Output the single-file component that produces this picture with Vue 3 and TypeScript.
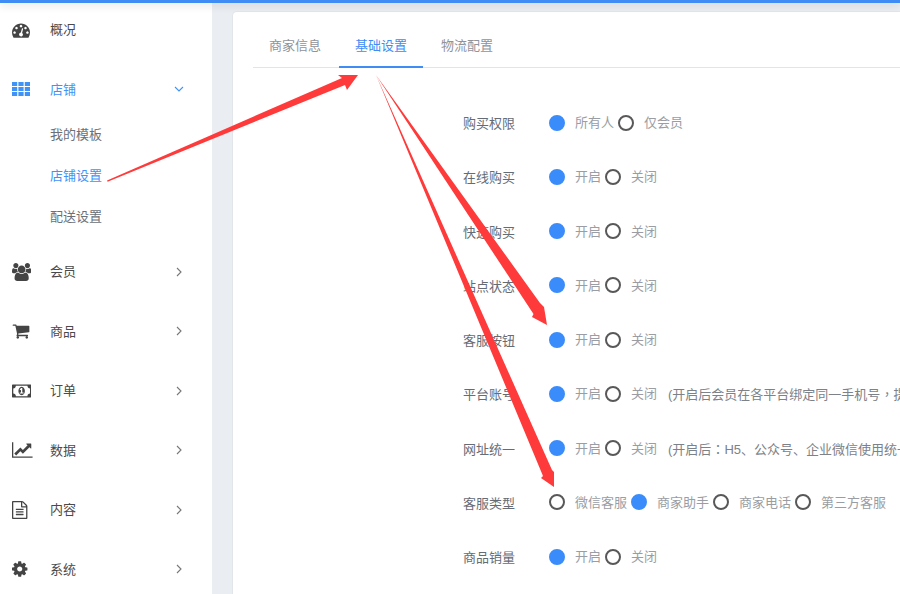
<script setup lang="ts">
import { ref } from 'vue'

interface Icon {
  box: string
  d: string
}

interface NavItem {
  label: string
  icon: Icon
  open?: boolean
  children?: string[]
}

interface Choice {
  text: string
  on?: boolean
}

interface FormRow {
  label: string
  choices: Choice[]
  note?: string
}

const icons: Record<string, Icon> = {
  dashboard: {
    box: '0 0 1792 1792',
    d: 'M384 1152q0-53-37.5-90.5t-90.5-37.5-90.5 37.5-37.5 90.5 37.5 90.5 90.5 37.5 90.5-37.5 37.5-90.5zm192-448q0-53-37.5-90.5t-90.5-37.5-90.5 37.5-37.5 90.5 37.5 90.5 90.5 37.5 90.5-37.5 37.5-90.5zm428 481l101-382q6-26-7.5-48.5t-38.5-29.5-48 6.5-30 39.5l-101 382q-60 5-107 43.5t-63 98.5q-20 77 20 146t117 89 146-20 89-117q16-60-6-117t-72-91zm660-33q0-53-37.5-90.5t-90.5-37.5-90.5 37.5-37.5 90.5 37.5 90.5 90.5 37.5 90.5-37.5 37.5-90.5zm-640-640q0-53-37.5-90.5t-90.5-37.5-90.5 37.5-37.5 90.5 37.5 90.5 90.5 37.5 90.5-37.5 37.5-90.5zm448 192q0-53-37.5-90.5t-90.5-37.5-90.5 37.5-37.5 90.5 37.5 90.5 90.5 37.5 90.5-37.5 37.5-90.5zm320 448q0 261-141 483-19 29-54 29h-1402q-35 0-54-29-141-221-141-483 0-182 71-348t191-286 286-191 348-71 348 71 286 191 191 286 71 348z',
  },
  grid: {
    box: '0 0 18 14',
    d: 'M0 0h5.2v4h-5.2zM6.4 0h5.2v4h-5.2zM12.8 0h5.2v4h-5.2zM0 5h5.2v4h-5.2zM6.4 5h5.2v4h-5.2zM12.8 5h5.2v4h-5.2zM0 10h5.2v4h-5.2zM6.4 10h5.2v4h-5.2zM12.8 10h5.2v4h-5.2z',
  },
  users: {
    box: '0 0 1920 1792',
    d: 'M593 896q-162 5-265 128h-134q-82 0-138-40.5t-56-118.5q0-353 124-353 6 0 43.5 21t97.5 42.5 119 21.5q67 0 133-23-5 37-5 66 0 139 81 256zm1071 637q0 120-73 189.5t-194 69.5h-874q-121 0-194-69.5t-73-189.5q0-53 3.5-103.5t14-109 26.5-108.5 43-97.5 62-81 85.5-53.5 111.5-20q10 0 43 21.5t73 48 107 48 135 21.5 135-21.5 107-48 73-48 43-21.5q61 0 111.5 20t85.5 53.5 62 81 43 97.5 26.5 108.5 14 109 3.5 103.5zm-1024-1277q0 106-75 181t-181 75-181-75-75-181 75-181 181-75 181 75 75 181zm704 384q0 159-112.5 271.5t-271.5 112.5-271.5-112.5-112.5-271.5 112.5-271.5 271.5-112.5 271.5 112.5 112.5 271.5zm576 225q0 78-56 118.5t-138 40.5h-134q-103-123-265-128 81-117 81-256 0-29-5-66 66 23 133 23 59 0 119-21.5t97.5-42.5 43.5-21q124 0 124 353zm-128-609q0 106-75 181t-181 75-181-75-75-181 75-181 181-75 181 75 75 181z',
  },
  cart: {
    box: '0 0 1792 1792',
    d: 'M704 1536q0 52-38 90t-90 38-90-38-38-90 38-90 90-38 90 38 38 90zm896 0q0 52-38 90t-90 38-90-38-38-90 38-90 90-38 90 38 38 90zm128-1088v512q0 24-16.5 42.5t-40.5 21.5l-1044 122q13 60 13 70 0 16-24 64h920q26 0 45 19t19 45-19 45-45 19h-1024q-26 0-45-19t-19-45q0-11 8-31.5t16-36 21.5-40 15.5-29.5l-177-823h-204q-26 0-45-19t-19-45 19-45 45-19h256q16 0 28.5 6.5t19.5 15.5 13 24.5 8 26 5.5 29.5 4.5 26h1201q26 0 45 19t19 45z',
  },
  money: {
    box: '0 0 1920 1792',
    d: 'M768 1152h384v-96h-128v-448h-114l-148 137 77 80q42-37 55-57h2v288h-128v96zm512-256q0 70-21 142t-59.5 134-101.5 101-138 39-138-39-101.5-101-59.5-134-21-142 21-142 59.5-134 101.5-101 138-39 138 39 101.5 101 59.5 134 21 142zm512 256v-512q-106 0-181-75t-75-181h-1152q0 106-75 181t-181 75v512q106 0 181 75t75 181h1152q0-106 75-181t181-75zm128-832v1152q0 26-19 45t-45 19h-1792q-26 0-45-19t-19-45v-1152q0-26 19-45t45-19h1792q26 0 45 19t19 45z',
  },
  chart: {
    box: '0 0 2048 1792',
    d: 'M2048 1536v128h-2048v-1536h128v1408h1920zm-128-1248v435q0 21-19.5 29.5t-35.5-7.5l-121-121-633 633q-10 10-23 10t-23-10l-233-233-416 416-192-192 585-585q10-10 23-10t23 10l233 233 464-464-121-121q-16-16-7.5-35.5t29.5-19.5h435q14 0 23 9t9 23z',
  },
  file: {
    box: '128 0 1664 1792',
    d: 'M1596 380q28 28 48 76t20 88v1152q0 40-28 68t-68 28h-1344q-40 0-68-28t-28-68v-1600q0-40 28-68t68-28h896q40 0 88 20t76 48zm-444-244v376h376q-10-29-22-41l-313-313q-12-12-41-22zm384 1528v-1024h-416q-40 0-68-28t-28-68v-416h-768v1536h1280zm-1024-864q0-14 9-23t23-9h704q14 0 23 9t9 23v64q0 14-9 23t-23 9h-704q-14 0-23-9t-9-23v-64zm736 224q14 0 23 9t9 23v64q0 14-9 23t-23 9h-704q-14 0-23-9t-9-23v-64q0-14 9-23t23-9h704zm0 256q14 0 23 9t9 23v64q0 14-9 23t-23 9h-704q-14 0-23-9t-9-23v-64q0-14 9-23t23-9h704z',
  },
  cog: {
    box: '128 0 1664 1792',
    d: 'M1152 896q0-106-75-181t-181-75-181 75-75 181 75 181 181 75 181-75 75-181zm512-109v222q0 12-8 23t-20 13l-185 28q-19 54-39 91 35 50 107 138 10 12 10 25t-9 23q-27 37-99 108t-94 71q-12 0-26-9l-138-108q-44 23-91 38-16 136-29 186-7 28-36 28h-222q-14 0-24.5-8.5t-11.5-21.5l-28-184q-49-16-90-37l-141 107q-10 9-25 9-14 0-25-11-126-114-165-168-7-10-7-23 0-12 8-23 15-21 51-66.5t54-70.5q-27-50-41-99l-183-27q-13-2-21-12.5t-8-23.5v-222q0-12 8-23t19-13l186-28q14-46 39-92-40-57-107-138-10-12-10-24 0-10 9-23 26-36 98.5-107.5t94.5-71.5q13 0 26 10l138 107q44-23 91-38 16-136 29-186 7-28 36-28h222q14 0 24.5 8.5t11.5 21.5l28 184q49 16 90 37l142-107q9-9 24-9 13 0 25 10 129 119 165 170 7 8 7 22 0 12-8 23-15 21-51 66.5t-54 70.5q26 50 41 98l183 28q13 2 21 12.5t8 23.5z',
  },
}

const navItems: NavItem[] = [
  { label: '概况', icon: icons.dashboard },
  { label: '店铺', icon: icons.grid, open: true, children: ['我的模板', '店铺设置', '配送设置'] },
  { label: '会员', icon: icons.users, children: [] },
  { label: '商品', icon: icons.cart, children: [] },
  { label: '订单', icon: icons.money, children: [] },
  { label: '数据', icon: icons.chart, children: [] },
  { label: '内容', icon: icons.file, children: [] },
  { label: '系统', icon: icons.cog, children: [] },
]

const tabs = ['商家信息', '基础设置', '物流配置']
const activeTab = ref('基础设置')
const activeSub = ref('店铺设置')

const onOff: Choice[] = [{ text: '开启', on: true }, { text: '关闭' }]

const rows: FormRow[] = [
  { label: '购买权限', choices: [{ text: '所有人', on: true }, { text: '仅会员' }] },
  { label: '在线购买', choices: onOff },
  { label: '快速购买', choices: onOff },
  { label: '站点状态', choices: onOff },
  { label: '客服按钮', choices: onOff },
  { label: '平台账号', choices: onOff, note: '(开启后会员在各平台绑定同一手机号，提示合并账号)' },
  { label: '网址统一', choices: onOff, note: '(开启后：H5、公众号、企业微信使用统一网址)' },
  {
    label: '客服类型',
    choices: [{ text: '微信客服' }, { text: '商家助手', on: true }, { text: '商家电话' }, { text: '第三方客服' }],
  },
  { label: '商品销量', choices: onOff },
]

// the comma and colon sit centred in their box in the original, so they get another CJK face
const noteParts = (note: string) => note.split(/([，：])/)
</script>

<template>
  <div class="page">
    <div class="topbar"></div>

    <aside class="sidebar">
      <template v-for="item in navItems" :key="item.label">
        <div class="nav-item" :class="{ 'nav-item--open': item.open }">
          <span class="nav-item__icon">
            <svg class="icon" :class="{ 'icon--grid': item.open }" :viewBox="item.icon.box">
              <path :d="item.icon.d" />
            </svg>
          </span>
          <span class="nav-item__label">{{ item.label }}</span>
          <svg v-if="item.children" class="nav-item__arrow" viewBox="0 0 10 10">
            <path v-if="item.open" d="M1 3l4 4 4-4" />
            <path v-else d="M3 1l4 4-4 4" />
          </svg>
        </div>
        <div v-if="item.open" class="subnav">
          <div
            v-for="child in item.children"
            :key="child"
            class="subnav__item"
            :class="{ 'subnav__item--active': child === activeSub }"
          >
            {{ child }}
          </div>
        </div>
      </template>
    </aside>

    <main class="main">
      <section class="card">
        <nav class="tabs">
          <div
            v-for="tab in tabs"
            :key="tab"
            class="tabs__item"
            :class="{ 'tabs__item--active': tab === activeTab }"
          >
            {{ tab }}
          </div>
        </nav>

        <div class="form">
          <div v-for="row in rows" :key="row.label" class="form-row">
            <span class="form-row__label">{{ row.label }}</span>
            <div class="form-row__choices">
              <span v-for="choice in row.choices" :key="choice.text" class="radio">
                <i class="radio__dot" :class="{ 'radio__dot--on': choice.on }"></i>
                <span>{{ choice.text }}</span>
              </span>
              <span v-if="row.note" class="form-row__note">
                <span
                  v-for="(part, i) in noteParts(row.note)"
                  :key="i"
                  :class="{ 'form-row__punct': i % 2 === 1 }"
                >{{ part }}</span>
              </span>
            </div>
          </div>
        </div>
      </section>
    </main>

    <svg class="arrows" viewBox="0 0 900 594">
      <polygon points="107,180.4 342,78 338,75 358,75 347,90 345,85 107.6,181.8" />
      <polygon points="376,75 540,303 544,307 547,325 532,317 533.5,314" />
      <polygon points="376,75 552,470 554,472 554,487 541,478 543,476" />
    </svg>
  </div>
</template>

<style>
html,
body {
  height: 100%;
  overflow: hidden;
}
</style>

<style scoped>
.page {
  position: relative;
  display: flex;
  width: 900px;
  height: 594px;
  overflow: hidden;
  background: #eaedf1;
  font-family: "Liberation Sans", "Noto Sans CJK SC", sans-serif;
  font-size: 13px;
}

.topbar {
  position: absolute;
  top: 0;
  left: 0;
  right: 0;
  height: 3px;
  background: #3f8cf5;
  box-shadow: 0 2px 8px rgba(0, 0, 0, 0.18);
  z-index: 2;
}

.sidebar {
  flex: none;
  width: 212px;
  background: #fff;
}

.nav-item {
  display: flex;
  align-items: center;
  height: 59.5px;
  padding-left: 12px;
  color: #4a4a4a;
}

.nav-item--open {
  color: #3f93f7;
}

.nav-item__icon {
  flex: none;
  display: flex;
  align-items: center;
  width: 38px;
}

.icon {
  width: auto;
  height: 18px;
  fill: #444;
}

.icon--grid {
  height: 14px;
  fill: #3f93f7;
}

.nav-item__label {
  flex: 1;
  padding-bottom: 2px;
}

.nav-item__arrow {
  width: 10px;
  height: 10px;
  margin-right: 28px;
  fill: none;
  stroke: #777;
  stroke-width: 1.1;
}

.nav-item--open .nav-item__arrow {
  stroke: #3f93f7;
}

.subnav {
  margin: -4.5px 0 4.5px;
}

.subnav__item {
  height: 41px;
  line-height: 39px;
  padding-left: 50px;
  color: #6b7078;
}

.subnav__item--active {
  color: #3f93f7;
}

.main {
  flex: 1;
  min-width: 0;
  padding: 12px 0 0 21px;
}

.card {
  height: 100%;
  padding-left: 20px;
  background: #fff;
  border-radius: 4px 0 0 0;
  box-shadow: 0 0 0 1px #e2e6ea;
}

.tabs {
  display: flex;
  gap: 2px;
  height: 55px;
  border-bottom: 1px solid #e1e4ea;
}

.tabs__item {
  box-sizing: border-box;
  width: 84px;
  height: 56px;
  line-height: 68px;
  text-align: center;
  color: #909399;
}

.tabs__item--active {
  color: #3f8cf5;
  border-bottom: 2px solid #3f8cf5;
}

.form {
  padding: 28px 0 0 210px;
}

.form-row {
  display: flex;
  height: 54.25px;
  white-space: nowrap;
}

.form-row__label {
  flex: none;
  width: 86px;
  height: 54px;
  line-height: 56px;
  color: #666c75;
}

.form-row__choices {
  display: flex;
  align-items: flex-start;
  gap: 4px;
  color: #9a9da3;
  line-height: 54px;
}

.radio {
  display: flex;
  align-items: center;
  gap: 10px;
  height: 54px;
}

.radio__dot {
  width: 16px;
  height: 16px;
  box-sizing: border-box;
  margin-top: -1px;
  border: 2px solid #585858;
  border-radius: 50%;
}

.radio__dot--on {
  background: #3b8cfb;
  border-color: #3b8cfb;
}

.form-row__note {
  margin-left: 7px;
  color: #7d8188;
}

.form-row__punct {
  font-family: "Noto Sans CJK TC", sans-serif;
}

.arrows {
  position: absolute;
  inset: 0;
  width: 900px;
  height: 594px;
  fill: #ff3a3a;
  pointer-events: none;
  z-index: 3;
}
</style>
